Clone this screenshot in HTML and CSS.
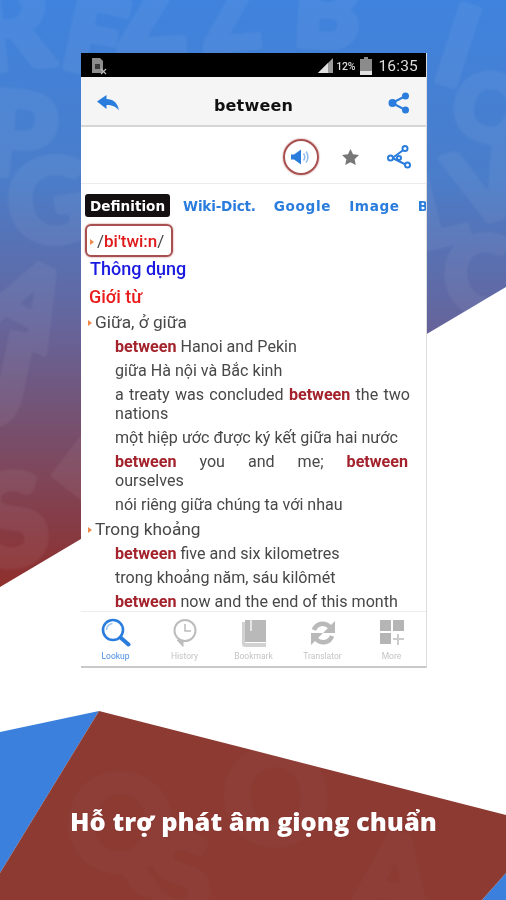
FILE: index.html
```html
<!DOCTYPE html>
<html lang="vi">
<head>
<meta charset="utf-8">
<title>between</title>
<link rel="stylesheet" href="styles.css">
</head>
<body>
<div class="stage">
  <svg class="backdrop" width="506" height="900" viewBox="0 0 506 900" aria-hidden="true">
    <defs>
      <linearGradient id="sky" x1="0" y1="0" x2="0" y2="1">
        <stop offset="0" stop-color="#3f83de"/>
        <stop offset="0.3" stop-color="#4a7dca"/>
        <stop offset="0.55" stop-color="#65659c"/>
        <stop offset="0.8" stop-color="#7e475c"/>
        <stop offset="1" stop-color="#8f2f2c"/>
      </linearGradient>
      <clipPath id="skyClip"><polygon points="0,0 506,0 506,287 0,587"/></clipPath>
      <clipPath id="redClip"><polygon points="99,711 506,815 506,873 482,900 0,900 0,873"/></clipPath>
    </defs>
    <rect width="506" height="900" fill="#fff"/>
    <rect width="506" height="587" fill="url(#sky)" clip-path="url(#skyClip)"/>
    <g clip-path="url(#skyClip)">
      <g class="letters">
        <text transform="translate(-22 72) rotate(-6)" font-size="120">R</text>
        <text transform="translate(58 66) rotate(12)" font-size="105">E</text>
        <text transform="translate(118 56) rotate(-4)" font-size="115">Z</text>
        <text transform="translate(205 52) rotate(-6)" font-size="95">Z</text>
        <text transform="translate(292 45) rotate(3)" font-size="100">B</text>
        <text transform="translate(430 78) rotate(18)" font-size="110">I</text>
        <text transform="translate(-20 172) rotate(6)" font-size="115">P</text>
        <text transform="translate(448 132) rotate(12)" font-size="90">O</text>
        <text transform="translate(14 248) rotate(-8)" font-size="115">G</text>
        <text transform="translate(462 228) rotate(-16)" font-size="100">V</text>
        <text transform="translate(420 250) rotate(-14)" font-size="100">L</text>
        <text transform="translate(-22 318) rotate(28)" font-size="105">A</text>
        <text transform="translate(450 318) rotate(-8)" font-size="105">C</text>
        <text transform="translate(-34 420) rotate(12)" font-size="130">J</text>
        <text transform="translate(48 470) rotate(38)" font-size="110">L</text>
        <text transform="translate(-14 570) rotate(-10)" font-size="125">S</text>
      </g>
    </g>
    <polygon points="0,732 99,711 0,873" fill="#3b80dc"/>
    <polygon points="506,873 506,900 482,900" fill="#3b80dc"/>
    <polygon points="99,711 506,815 506,873 482,900 0,900 0,873" fill="#8c3a32"/>
    <g clip-path="url(#redClip)">
      <g class="letters faint">
        <text transform="translate(60 860) rotate(10)" font-size="130">Q</text>
        <text transform="translate(230 850) rotate(-8)" font-size="130">O</text>
        <text transform="translate(150 915)" font-size="110">S</text>
        <text transform="translate(350 910) rotate(8)" font-size="110">A</text>
      </g>
    </g>
  </svg>

  <main class="phone">
    <div class="status">
      <svg class="sim" width="18" height="18" viewBox="0 0 18 18">
        <path d="M2 1h8l3 3v12H2z" fill="#8d8d8d"/>
        <path d="M5 7h5v5H5z" fill="#3a3a3a"/>
        <path d="M11 12l5 5M16 12l-5 5" stroke="#bbb" stroke-width="1.2"/>
      </svg>
      <div class="status-right">
        <svg width="16" height="16" viewBox="0 0 16 16"><path d="M0 15L15 0v15z" fill="#9a9a9a"/><path d="M0 15L10 5v10z" fill="#e0e0e0"/></svg>
        <span class="pct">12%</span>
        <svg class="batt" width="12" height="18" viewBox="0 0 12 18"><path d="M4 0h4v2h4v16H0V2h4z" fill="#8b8b8b"/><path d="M0 14h12v4H0z" fill="#e0e0e0"/></svg>
        <span class="clock">16:35</span>
      </div>
    </div>

    <header class="titlebar">
      <svg width="22" height="16" viewBox="0 0 22 16"><path d="M0 6.500L9.500 0v4c6.500 0 11 3.500 12.500 11.500C19 11.500 15 10 9.500 10v4z" fill="#2b7ddd"/></svg>
      <h1 class="word">between</h1>
      <svg width="22" height="22" viewBox="0 0 22 22"><path d="M17.500 4L4 11l13.500 7" fill="none" stroke="#2b7ddd" stroke-width="2"/><circle cx="4.500" cy="11" r="4" fill="#2b7ddd"/><circle cx="17.500" cy="4" r="3.500" fill="#2b7ddd"/><circle cx="17.500" cy="18" r="3.500" fill="#2b7ddd"/></svg>
    </header>

    <div class="tools">
      <span class="speaker">
        <svg width="20" height="18" viewBox="0 0 20 18"><path d="M0 6.500h3L10 1.500v15L3 11.500H0z" fill="#2b7ddd"/><path d="M12.500 5.500c1.500 2 1.500 5 0 7M15 3.500c2.500 3 2.500 8 0 11" fill="none" stroke="#8fbbee" stroke-width="1.500"/></svg>
      </span>
      <svg class="star" width="17" height="16" viewBox="0 0 18 17"><path d="M9 0l2.700 5.700 6.300.8-4.600 4.300 1.200 6.200L9 14l-5.600 3 1.200-6.200L0 6.500l6.300-.8z" fill="#777"/></svg>
      <svg width="24" height="24" viewBox="0 0 24 24" fill="none" stroke="#2b7ddd" stroke-width="2"><path d="M5.500 13L17 4.500M5.500 13l14 7"/><circle cx="3.500" cy="13" r="2.500" fill="#fff"/><circle cx="18" cy="3.500" r="2.500" fill="#fff"/><circle cx="20.500" cy="20" r="2.500" fill="#fff"/><circle cx="12" cy="13" r="2" fill="#fff"/></svg>
    </div>

    <nav class="tabs">
      <span class="tab active">Definition</span>
      <span class="tab narrow">Wiki-Dict.</span>
      <span class="tab wide">Google</span>
      <span class="tab wide">Image</span>
      <span class="tab">Bing</span>
    </nav>

    <section class="entry">
      <div class="phonetic"><i class="bullet"></i>/<b>bi'twi:n</b>/</div>
      <div class="usage">Thông dụng</div>
      <div class="pos">Giới từ</div>
      <div class="sense"><i class="bullet"></i>Giữa, ở giữa</div>
      <p class="ex"><b>between</b> Hanoi and Pekin</p>
      <p class="ex">giữa Hà nội và Bắc kinh</p>
      <p class="ex">a treaty was concluded <b>between</b> the two nations</p>
      <p class="ex">một hiệp ước được ký kết giữa hai nước</p>
      <p class="ex"><span class="just"><b>between</b> you and me; <b>between</b></span> ourselves</p>
      <p class="ex">nói riêng giữa chúng ta với nhau</p>
      <div class="sense"><i class="bullet"></i>Trong khoảng</div>
      <p class="ex"><b>between</b> five and six kilometres</p>
      <p class="ex">trong khoảng năm, sáu kilômét</p>
      <p class="ex"><b>between</b> now and the end of this month</p>
    </section>

    <footer class="bottom">
      <div class="item on">
        <svg width="30" height="30" viewBox="0 0 30 30" fill="none"><circle cx="12" cy="12" r="10" stroke="#2b7ddd" stroke-width="2.600"/><path d="M5.500 12a6.500 6.500 0 0 1 6-6.500" stroke="#9cc3f0" stroke-width="1.500"/><path d="M19.500 19.500l8 7" stroke="#2b7ddd" stroke-width="4" stroke-linecap="round"/></svg>
        <span>Lookup</span>
      </div>
      <div class="item">
        <svg width="30" height="30" viewBox="0 0 30 30" fill="none" stroke="#bcbcbc"><circle cx="15" cy="12.500" r="10.500" stroke-width="2"/><path d="M15 6v7h6" stroke-width="1.500"/><path d="M7 22l6 6.500V24z" fill="#bcbcbc"/></svg>
        <span>History</span>
      </div>
      <div class="item">
        <svg width="26" height="30" viewBox="0 0 26 30"><path d="M4 2h21v22H4z" fill="#b9b9b9"/><path d="M1 4h3v21h21v4H4c-2 0-3-1-3-3z" fill="#d2d2d2"/><path d="M9 13h2v-11h-2z" fill="#e6e6e6"/></svg>
        <span>Bookmark</span>
      </div>
      <div class="item">
        <svg width="28" height="30" viewBox="0 0 28 28" fill="none" stroke="#b9b9b9" stroke-width="4.500"><path d="M5 11c2-6 10-9 16-3"/><path d="M23 17c-2 6-10 9-16 3"/><path d="M26 2v12H14z" fill="#b9b9b9" stroke="none"/><path d="M2 26V14h12z" fill="#b9b9b9" stroke="none"/></svg>
        <span>Translator</span>
      </div>
      <div class="item">
        <svg width="24" height="26" viewBox="0 0 24 26" fill="#b5b5b5"><rect width="11" height="11"/><rect x="13" width="11" height="11"/><rect y="13" width="11" height="11"/><path d="M17 14h2v4h5v2h-5v5h-2v-5h-4v-2h4z" fill="#ccc"/></svg>
        <span>More</span>
      </div>
    </footer>
  </main>

  <p class="caption">Hỗ trợ phát âm giọng chuẩn</p>
</div>
</body>
</html>
```

FILE: styles.css
```css
* { box-sizing: border-box; }
html, body { margin: 0; padding: 0; background: #fff; }
.stage {
  position: relative;
  width: 506px;
  height: 900px;
  overflow: hidden;
  padding-top: 53px;
  font-family: Roboto, "Noto Sans", sans-serif;
}
.backdrop { position: absolute; left: 0; top: 0; }
.letters {
  opacity: 0.055;
  filter: blur(1px);
}
.letters.faint { opacity: 0.025; }
.letters text {
  font-family: Lato, "Open Sans", sans-serif;
  font-weight: 900;
  fill: #fff;
  stroke: #fff;
  stroke-width: 7px;
  stroke-linejoin: round;
}

.phone {
  position: relative;
  width: 346px;
  height: 615px;
  margin-left: 81px;
  background: #fff;
  display: flex;
  flex-direction: column;
  overflow: hidden;
  border-right: 1px solid #ddd;
  border-bottom: 2px solid #c9c9c9;
  filter: blur(0.6px);
}

.status {
  flex: none;
  height: 24px;
  background: #000;
  display: flex;
  align-items: center;
  justify-content: space-between;
  padding: 2px 8px 0 9px;
}
.status-right { display: flex; align-items: center; color: #ddd; }
.pct { font-size: 10.500px; margin-left: 2px; letter-spacing: -0.2px; font-weight: 500; }
.batt { margin-left: 5px; }
.clock { font-size: 15.500px; margin-left: 6px; letter-spacing: 0.2px; }

.titlebar {
  flex: none;
  height: 50px;
  background: #f5f5f5;
  border-bottom: 2px solid #d6d6d6;
  display: flex;
  align-items: center;
  justify-content: space-between;
  padding: 4px 16px 0;
}
.word {
  margin: 4px 0 0;
  font: bold 16px "DejaVu Sans", sans-serif;
  color: #111;
  letter-spacing: 0.2px;
}

.tools {
  flex: none;
  height: 57px;
  padding: 4px 15px 0 0;
  border-bottom: 1px solid #ececec;
  display: flex;
  align-items: center;
  justify-content: flex-end;
}
.speaker {
  width: 36px;
  height: 36px;
  border-radius: 50%;
  border: 2px solid #a8504f;
  box-shadow: 0 0 2px #b77;
  display: flex;
  align-items: center;
  justify-content: center;
}
.star { margin: 0 28px 0 23px; }

.tabs {
  flex: none;
  display: flex;
  align-items: center;
  height: 24px;
  margin-top: 9px;
  padding-left: 4px;
  gap: 8px;
  white-space: nowrap;
  overflow: hidden;
  font: bold 13.600px "DejaVu Sans", sans-serif;
  color: #2b7ddd;
}
.tab { flex: none; padding: 1px 5px 0; }
.tab.narrow { letter-spacing: -0.200px; }
.tab.wide { letter-spacing: 0.650px; }
.tab.active {
  background: #141011;
  color: #fff;
  border-radius: 3px;
  padding: 4px 5px 2px;
  line-height: 17px;
}

.entry {
  flex: 1;
  min-height: 0;
  overflow: hidden;
  padding: 7px 16px 0 4px;
  color: #484848;
  font-size: 16.100px;
  line-height: 19px;
}
.bullet {
  display: inline-block;
  width: 0;
  height: 0;
  border-left: 4px solid #ef8a4a;
  border-top: 3px solid transparent;
  border-bottom: 3px solid transparent;
  margin: 0 3px 2px 3px;
}
.phonetic {
  width: 88px;
  height: 33px;
  border: 2px solid #a8504f;
  border-radius: 6px;
  box-shadow: 0 0 2px #b77;
  line-height: 30px;
  font-size: 17px;
  white-space: nowrap;
}
.phonetic b { color: #e01a1a; font-weight: 500; }
.usage {
  margin: 0 0 0 5px;
  height: 24px;
  line-height: 24px;
  font-size: 18px;
  font-weight: 500;
  color: #1a1ae0;
}
.pos {
  margin: 4px 0 0 4px;
  height: 22px;
  line-height: 24px;
  font-size: 18px;
  font-weight: 500;
  color: #e81c1c;
}
.sense {
  margin-top: 6px;
  font-size: 17.300px;
  line-height: 19px;
}
.ex {
  margin: 5px 0 0 30px;
  text-align: justify;
}
.ex b { color: #a3222c; font-weight: 700; }
.just { display: block; margin-right: 2px; text-align-last: justify; }

.bottom {
  flex: none;
  height: 55px;
  border-top: 1px solid #ececec;
  background: #fff;
  display: flex;
  padding: 6px 0 0 0;
}
.item {
  flex: 1;
  display: flex;
  flex-direction: column;
  align-items: center;
  color: #c4c4c4;
  font-size: 8.500px;
  gap: 3px;
}
.item svg { height: 30px; }
.item.on { color: #4d8fe0; }

.caption {
  position: relative;
  margin: 136px 0 0 70px;
  font: 800 25.500px "Open Sans", sans-serif;
  color: #fff;
  white-space: nowrap;
  text-shadow: 0 0 1px #7a0f10;
}
```
